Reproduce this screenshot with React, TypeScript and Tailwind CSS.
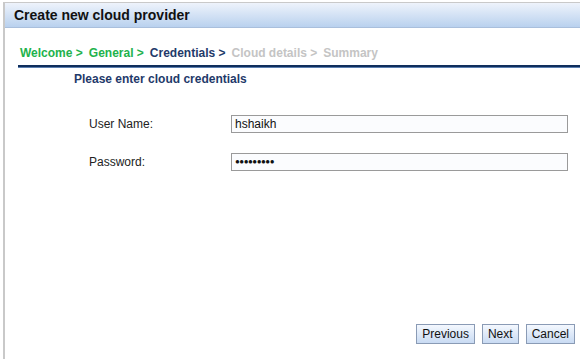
export default function App() {
  return (
    <div
      className="w-[580px] h-[359px] bg-white overflow-hidden pt-[2px] pl-[3px]"
      style={{ fontFamily: '"Liberation Sans", Arial, sans-serif' }}
    >
      <div className="h-[357px] border-l-2 border-t border-[#c9c9c9] flex flex-col">
        {/* Title bar */}
        <div className="h-[25px] border-b border-[#a9bfdc] bg-gradient-to-b from-[#eef3fb] to-[#b9d1ee] flex items-center pl-[9px]">
          <span className="text-[14px] font-bold text-[#111]">Create new cloud provider</span>
        </div>

        {/* Breadcrumb */}
        <div className="pl-[15px] pt-[16px] text-[12px] font-bold flex gap-[6px]">
          <span className="text-[#22b24c]">Welcome &gt;</span>
          <span className="text-[#22b24c]">General &gt;</span>
          <span className="text-[#1f3a6a]">Credentials &gt;</span>
          <span className="text-[#c4c4c4]">Cloud details &gt;</span>
          <span className="text-[#c4c4c4]">Summary</span>
        </div>
        <div className="ml-[13px] mt-[3px] h-[3px] bg-[#0f2e5c] border-b border-[#5b7fb0]" />

        <div className="pl-[69px] pt-[2px] text-[12px] font-bold text-[#1f3a6a]">
          Please enter cloud credentials
        </div>

        {/* Form */}
        <div className="pl-[84px] pt-[27px] flex flex-col gap-[20px] text-[12px] text-[#222]">
          <div className="flex items-center">
            <span className="w-[142px]">User Name:</span>
            <div className="w-[337px] h-[18px] border border-[#9a9a9a] bg-[#fbfcfe] flex items-center pl-[3px] text-[12px] text-[#111]">
              hshaikh
            </div>
          </div>
          <div className="flex items-center">
            <span className="w-[142px]">Password:</span>
            <div className="w-[337px] h-[18px] border border-[#9a9a9a] bg-[#fbfcfe] flex items-center pl-[3px] text-[8px] tracking-[-0.5px] text-[#111]">
              ●●●●●●●●●
            </div>
          </div>
        </div>

        {/* Buttons */}
        <div className="mt-auto mb-[15px] flex justify-end gap-[7px] pr-[5px] text-[12px] text-[#111]">
          <button className="h-[20px] px-[5px] border border-[#8a9bb5] bg-gradient-to-b from-[#f4f8fe] to-[#c9dbf3]">
            Previous
          </button>
          <button className="h-[20px] px-[5px] border border-[#8a9bb5] bg-gradient-to-b from-[#f4f8fe] to-[#c9dbf3]">
            Next
          </button>
          <button className="h-[20px] px-[5px] border border-[#8a9bb5] bg-gradient-to-b from-[#f4f8fe] to-[#c9dbf3]">
            Cancel
          </button>
        </div>
      </div>
    </div>
  );
}
